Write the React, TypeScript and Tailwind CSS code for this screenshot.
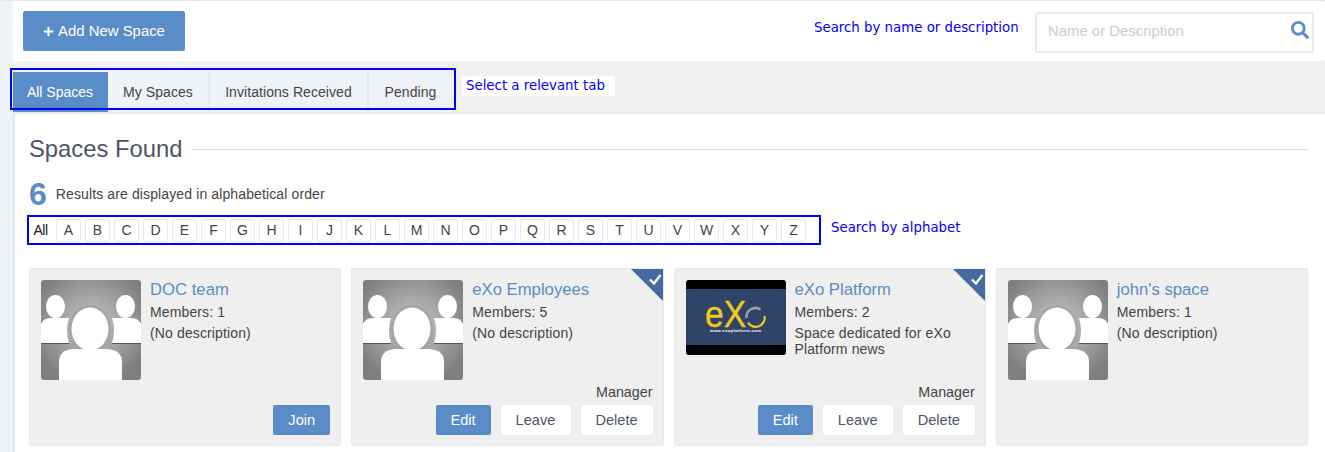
import React from 'react'
import { FaPlus, FaSearch } from 'react-icons/fa'

const letters = 'ABCDEFGHIJKLMNOPQRSTUVWXYZ'.split('')

const Avatar = ({ id }: { id: string }) => (
  <svg viewBox="0 0 100 100" className="block w-[100px] h-[100px] shrink-0 rounded-[3px]">
    <defs>
      <radialGradient id={id} cx="50%" cy="45%" r="60%">
        <stop offset="0%" stopColor="#c8c8c8" />
        <stop offset="55%" stopColor="#a0a0a0" />
        <stop offset="100%" stopColor="#7f7f7f" />
      </radialGradient>
    </defs>
    <rect width="100" height="100" fill={`url(#${id})`} />
    <rect x="0" y="63" width="28" height="1" fill="#555" />
    <rect x="71" y="63" width="29" height="1" fill="#555" />
    <path d="M0 44 Q2 38 10 38 L28 38 Q24 50 28 63 L0 63 Z" fill="#fff" />
    <path d="M100 44 Q98 38 90 38 L71 38 Q75 50 71 63 L100 63 Z" fill="#fff" />
    <ellipse cx="14.5" cy="26.5" rx="9.5" ry="11.5" fill="#fff" />
    <ellipse cx="84.5" cy="26.5" rx="9.5" ry="11.5" fill="#fff" />
    <ellipse cx="49" cy="49" rx="21" ry="24" fill="#9a9a9a" opacity="0.5" />
    <ellipse cx="49" cy="49" rx="18.5" ry="21.5" fill="#fff" />
    <path d="M18 100 L18 82 Q18 70 32 69 L66 69 Q81 70 81 82 L81 100 Z" fill="#fff" />
  </svg>
)

const ExoLogo = () => (
  <svg viewBox="0 0 100 75" className="block w-[100px] h-[75px] shrink-0 rounded-[3px]">
    <rect width="100" height="75" fill="#000" />
    <rect y="9" width="100" height="56" fill="#2f4468" />
    <text x="19" y="47" fill="#f2c81e" stroke="#f2c81e" strokeWidth="0.4" fontSize="37" fontFamily="Liberation Sans, sans-serif" textLength="41" lengthAdjust="spacingAndGlyphs">eX</text>
    <path d="M60.5 38 A9 9 0 0 1 74.5 29.5" fill="none" stroke="#9aa0a8" strokeWidth="2.6" />
    <path d="M78.5 36 A9 9 0 0 1 62 42.5" fill="none" stroke="#f2c81e" strokeWidth="2.2" />
    <text x="24" y="51.5" fill="#fff" fontSize="4.3" fontWeight="700" fontFamily="Liberation Sans, sans-serif" textLength="51">www.exoplatform.com</text>
  </svg>
)

const Ribbon = () => (
  <svg viewBox="0 0 32 32" className="absolute top-0 right-0 w-[32px] h-[32px]">
    <path d="M0 0 L32 0 L32 32 Z" fill="#46699f" />
    <path d="M19 10.5 L23 14.5 L29.5 6" fill="none" stroke="#fff" strokeWidth="2.4" />
  </svg>
)

const JoinButton = () => (
  <button className="h-[30px] w-[57px] pt-[1px] rounded-[2px] bg-[#5a8dc8] text-white text-[14.6px]">Join</button>
)

const ManagerButtons = () => (
  <div className="flex gap-[10px] text-[14.6px]">
    <button className="h-[30px] w-[55px] pt-[1px] rounded-[2px] bg-[#5a8dc8] text-white">Edit</button>
    <button className="h-[30px] w-[70px] pt-[1px] rounded-[2px] bg-white text-[#4d5466]">Leave</button>
    <button className="h-[30px] w-[72px] pt-[1px] rounded-[2px] bg-white text-[#4d5466]">Delete</button>
  </div>
)

type CardProps = {
  name: string
  members: number
  description: string
  manager?: boolean
  join?: boolean
  image: React.ReactNode
}

const SpaceCard = ({ name, members, description, manager, join, image }: CardProps) => (
  <div className="relative h-[178px] bg-[#efefef] border border-[#e3e9f0] rounded-[2px] pt-[11px] pl-[11px] pr-[10px] flex flex-col">
    {manager && <Ribbon />}
    <div className="flex gap-[9px] h-[100px]">
      {image}
      <div className="text-[14px] tracking-[0.13px] text-[#444444] pr-[20px]">
        <a className="block text-[16.7px] tracking-normal leading-[20px] text-[#5a8dc8]">{name}</a>
        <div className="mt-[1px] leading-[22px]">Members: {members}</div>
        <div className="leading-[16px] mt-[2px]">{description}</div>
      </div>
    </div>
    <div className="flex-1 flex flex-col justify-end items-end pb-[10px]">
      {manager && <div className="text-[14.3px] leading-[20px] text-[#444444] mb-[3px]">Manager</div>}
      {join && <JoinButton />}
      {manager && <ManagerButtons />}
    </div>
  </div>
)

const noteClass = "absolute font-['DejaVu_Sans'] text-[13.33px] leading-[20px] text-[#0000ff] bg-white"

export default function App() {
  return (
    <div className="relative w-[1325px] h-[452px] overflow-hidden bg-[#f0f0f0] font-['Liberation_Sans',sans-serif] text-[14px]">
      <div className="absolute inset-y-0 left-0 w-[13px] bg-[#eff2f6]" />
      <div className="relative pl-[13px] border-t border-[#e3e9f0]">
        <div className="h-[60px] bg-white rounded-[2px] flex items-center justify-between pl-[10px] pr-[11px]">
          <button className="h-[40px] w-[162px] bg-[#5a8dc8] rounded-[2px] text-white text-[14.9px] flex items-center justify-center gap-[4px]">
            <FaPlus className="w-[11px] h-[11px]" />
            Add New Space
          </button>
          <div className="relative w-[279px] h-[41px] mt-[2px] pb-[2px] border-2 border-[#e3e9f0] rounded-[3px] flex items-center pl-[11px] text-[14.9px] text-[#cccccc]">
            Name or Description
            <FaSearch className="absolute right-[3px] top-[7px] w-[18px] h-[18px] text-[#5a8dc8]" />
          </div>
        </div>

        <div className="flex h-[40px] mt-[11px] text-[14px] tracking-[0.07px] text-[#444444]">
          <div className="w-[95px] pr-[1px] tracking-normal bg-[#5a8dc8] text-white flex items-center justify-center">All Spaces</div>
          <div className="w-[102px] bg-[#eff2f6] border-r-2 border-[#e3e9f0] flex items-center justify-center">My Spaces</div>
          <div className="w-[159px] bg-[#eff2f6] border-r-2 border-[#e3e9f0] flex items-center justify-center">Invitations Received</div>
          <div className="w-[86px] pr-[3px] bg-[#eff2f6] flex items-center justify-center">Pending</div>
        </div>

        <div className="bg-white border-t-2 border-l-2 border-[#e3e9f0] h-[340px] pl-[14px] pr-[17px]">
          <div className="flex items-center gap-[9px] h-[30px] mt-[20px]">
            <h2 className="text-[23.8px] leading-[30px] text-[#4d5466]">Spaces Found</h2>
            <div className="flex-1 h-px bg-[#d8dde5]" />
          </div>
          <div className="flex items-center gap-[9px] h-[30px] mt-[15px]">
            <span className="text-[32px] leading-[30px] font-bold text-[#5a8dc8]">6</span>
            <span className="text-[14px] tracking-[0.12px] text-[#444444]">Results are displayed in alphabetical order</span>
          </div>
          <div className="flex gap-[4px] mt-[10px] h-[23px] pl-[3px] text-[14px] text-[#444444]">
            <div className="w-[20px] pr-[3px] flex items-center justify-center tracking-[-0.5px] text-[#222222] bg-white">All</div>
            {letters.map((letter) => (
              <div key={letter} className="w-[25px] flex items-center justify-center border border-[#e3e9f0] rounded-[3px]">
                {letter}
              </div>
            ))}
          </div>
          <div className="grid grid-cols-4 gap-[10px] mt-[26px]">
            <SpaceCard name="DOC team" members={1} description="(No description)" join image={<Avatar id="avatar1" />} />
            <SpaceCard name="eXo Employees" members={5} description="(No description)" manager image={<Avatar id="avatar2" />} />
            <SpaceCard name="eXo Platform" members={2} description="Space dedicated for eXo Platform news" manager image={<ExoLogo />} />
            <SpaceCard name="john's space" members={1} description="(No description)" image={<Avatar id="avatar3" />} />
          </div>
        </div>
      </div>

      {/* blue annotations drawn over the page */}
      <div className="absolute left-[10px] top-[68px] w-[446px] h-[42px] border-2 border-[#0000ff]" />
      <div className="absolute left-[27px] top-[215px] w-[794px] h-[30px] border-2 border-[#0000ff]" />
      <div className={`${noteClass} left-[814px] top-[18px]`}>Search by name or description</div>
      <div className={`${noteClass} left-[461px] top-[76px] pl-[5px] pr-[10px]`}>Select a relevant tab</div>
      <div className={`${noteClass} left-[831px] top-[218px]`}>Search by alphabet</div>
    </div>
  )
}
